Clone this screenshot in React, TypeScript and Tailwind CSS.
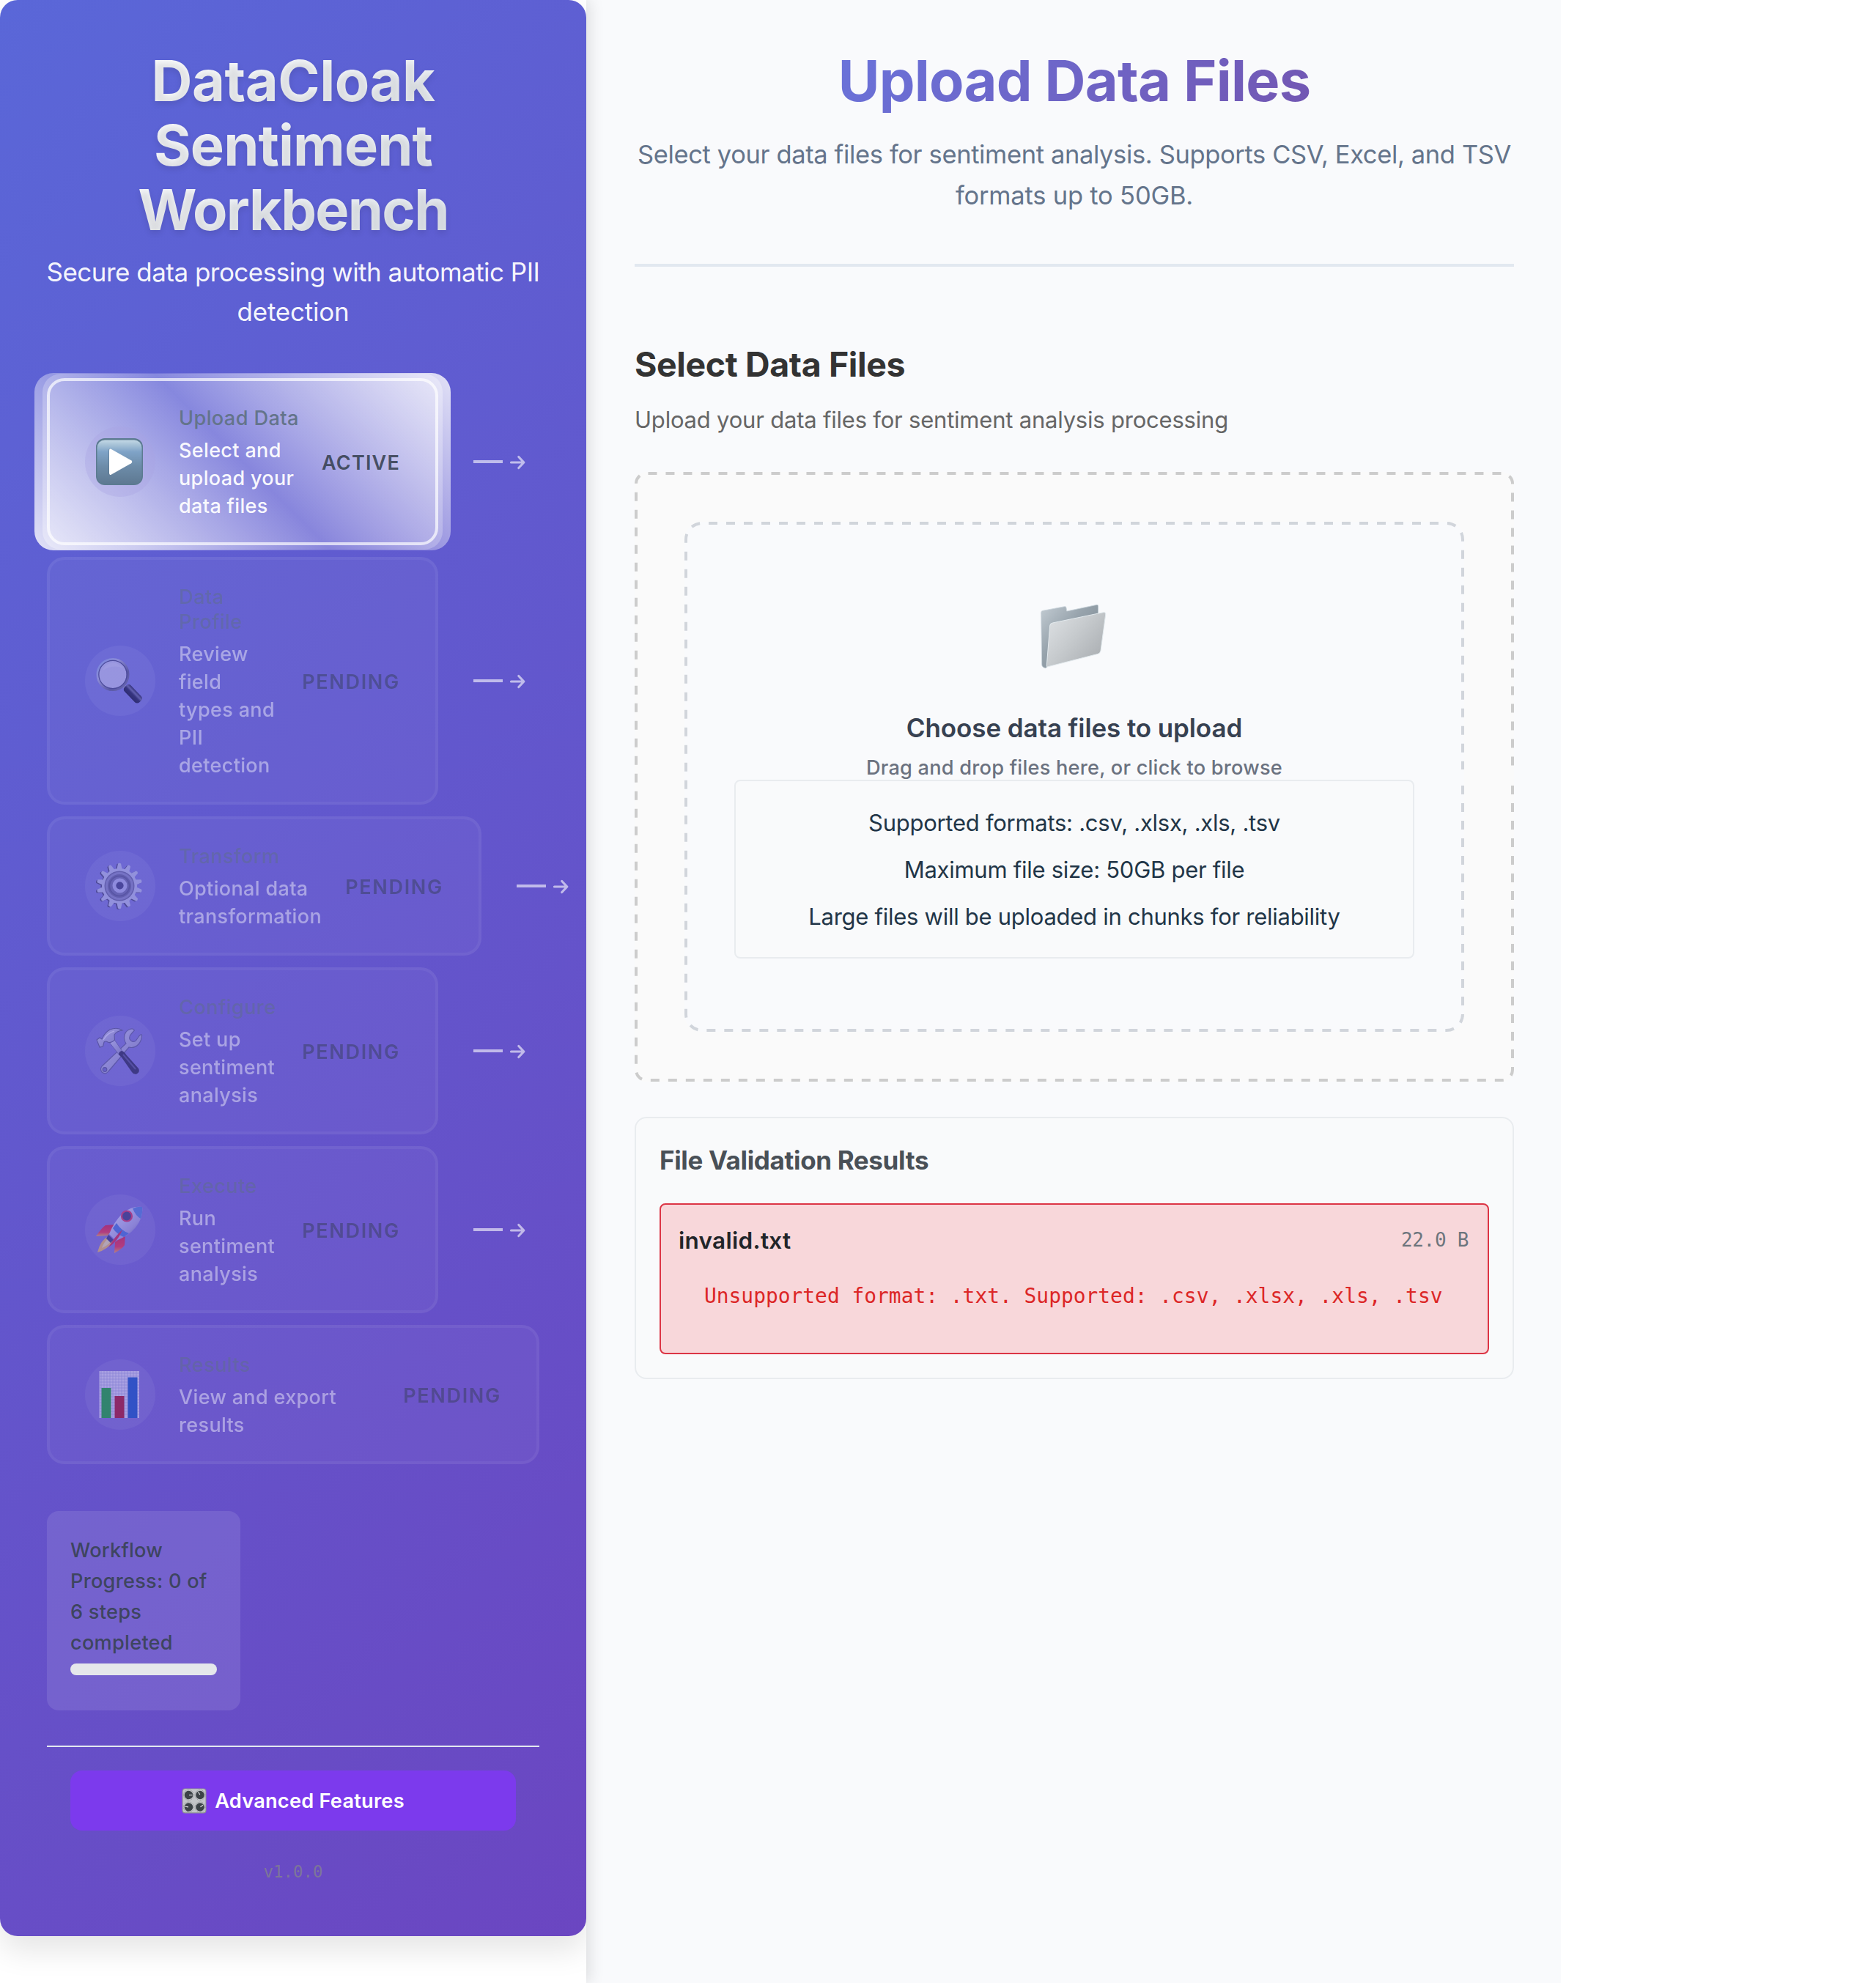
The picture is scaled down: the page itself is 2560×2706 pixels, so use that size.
import React from "react";

function PlayIcon() {
  return (
    <svg viewBox="0 0 64 64" className="size-16">
      <defs>
        <linearGradient id="play-face" x1="0" y1="0" x2="0" y2="1">
          <stop offset="0" stopColor="#c3d8e6" />
          <stop offset="0.1" stopColor="#a9c4d8" />
          <stop offset="0.27" stopColor="#7fa3c7" />
          <stop offset="0.6" stopColor="#6d8ca9" />
          <stop offset="1" stopColor="#5e7992" />
        </linearGradient>
      </defs>
      <rect x="0" y="0" width="64" height="64" rx="12" fill="#5c7b91" />
      <rect x="1.5" y="2.5" width="61" height="59.5" rx="10.5" fill="url(#play-face)" />
      <path d="M17 17 Q17 13.6 20.3 15 L47.4 30.3 Q50.3 32.2 47.4 34.2 L20.4 49.4 Q17 51 17 47.6 Z" fill="#4f6b84" opacity="0.5" />
      <path d="M18 17 Q18 13.6 21 15 L48 30.3 Q50.6 32.2 48 34.2 L21 49.4 Q18 51 18 47.6 Z" fill="#fff" />
    </svg>
  );
}

function SearchIcon() {
  return (
    <svg viewBox="0 0 64 64" className="size-16">
      <defs>
        <linearGradient id="lens-rim" x1="0" y1="0" x2="1" y2="1">
          <stop offset="0" stopColor="#8fb0f0" />
          <stop offset="0.35" stopColor="#b8b8da" />
          <stop offset="0.7" stopColor="#55557c" />
          <stop offset="1" stopColor="#77779a" />
        </linearGradient>
        <linearGradient id="lens-handle" x1="0" y1="1" x2="0" y2="0">
          <stop offset="0" stopColor="#000018" />
          <stop offset="0.45" stopColor="#0c0c30" />
          <stop offset="0.7" stopColor="#64648c" />
          <stop offset="1" stopColor="#0a0a28" />
        </linearGradient>
      </defs>
      <path d="M38 39 L43 44" stroke="#9a9ac0" strokeWidth="5" />
      <circle cx="23" cy="23.500" r="20.500" fill="#d0cdee" stroke="url(#lens-rim)" strokeWidth="4" />
      <circle cx="23" cy="23.500" r="19.200" fill="none" stroke="#3a3a66" strokeWidth="1.200" />
      <path d="M9 18 Q12 9 22 7.500 Q31 7 37 15 Q24 9 9 18Z" fill="#fff" opacity="0.25" />
      <rect x="36" y="43.500" width="29" height="12" rx="4.500" transform="rotate(46 50 49.500)" fill="url(#lens-handle)" />
    </svg>
  );
}

const TEETH = Array.from({ length: 14 }, (_, i) => (i * 360) / 14);

function GearIcon() {
  return (
    <svg viewBox="0 0 64 64" className="size-16">
      <g fill="#3c3c62" transform="translate(-1.600 0.800)">
        {TEETH.map((a) => (
          <path key={a} d="M27.800 12 L30 1.500 Q32 0 34 1.500 L36.200 12 Z" transform={`rotate(${a} 32 32)`} />
        ))}
        <circle cx="32" cy="32" r="24" />
      </g>
      <g fill="#c4c8ea">
        {TEETH.map((a) => (
          <path key={a} d="M27.800 12 L30 1.500 Q32 0 34 1.500 L36.200 12 Z" transform={`rotate(${a} 32 32)`} />
        ))}
        <circle cx="32" cy="32" r="24" />
      </g>
      <circle cx="32" cy="32" r="20.500" fill="#62628e" />
      <circle cx="32" cy="32" r="17.500" fill="none" stroke="#8a8aba" strokeWidth="3" />
      <circle cx="32" cy="32" r="13.500" fill="none" stroke="#50507c" strokeWidth="1.500" />
      <circle cx="32" cy="32" r="12.500" fill="#6c6c9c" />
      <circle cx="32.500" cy="31.500" r="7.500" fill="none" stroke="#bcbcec" strokeWidth="5" />
      <circle cx="32.500" cy="31.500" r="5" fill="#34346c" />
    </svg>
  );
}

function ToolsIcon() {
  return (
    <svg viewBox="0 0 64 64" className="size-16">
      <defs>
        <linearGradient id="steel" x1="0" y1="0" x2="1" y2="1">
          <stop offset="0" stopColor="#dcdcf4" />
          <stop offset="0.5" stopColor="#b4b4da" />
          <stop offset="1" stopColor="#8c8cb8" />
        </linearGradient>
      </defs>
      <path
        d="M46 2.500 Q38 6 38.500 15 Q39 19 41 22 L8 53 Q5 57 8 61 Q13 65 17 60 L45 27 Q52 29 58 23 Q63 17 62.500 10 Q60 9 58 13 L54 18.500 Q49 21 46 16 Q45 12 48 9 L52.500 4 Q51 0.500 46 2.500Z"
        fill="url(#steel)"
        stroke="#58588a"
        strokeWidth="1.200"
      />
      <circle cx="12" cy="57.500" r="2.800" fill="#6a67c4" stroke="#51517f" strokeWidth="1.200" />
      <path d="M18 20 L24.500 16 L37 34 L32 38Z" fill="url(#steel)" stroke="#58588a" strokeWidth="0.800" />
      <path d="M31 37 Q31 33 35 32 Q39 33 41 37 L58 56 Q60.500 61 55.500 63.500 Q51 64.500 49 61 L35 41Z" fill="#1c1c40" />
      <path d="M37 37 L54 57" stroke="#4a4a7a" strokeWidth="2" />
      <path
        d="M1 17 L5 14 L8 16 Q12 7 19 3 Q29 -1 36 4 Q28 5 25 10 L25.500 17 Q21 22 16 20 Q13 18 11 20 L9.500 26 L5 27Z"
        fill="url(#steel)"
        stroke="#50507e"
        strokeWidth="1.100"
      />
      <path d="M10 17 Q15 8 25 5" stroke="#f2f2ff" strokeWidth="1.500" fill="none" />
    </svg>
  );
}

function RocketIcon() {
  return (
    <svg viewBox="0 0 64 64" className="size-16">
      <defs>
        <linearGradient id="hull" x1="0" y1="0" x2="1" y2="1">
          <stop offset="0" stopColor="#60a6ee" />
          <stop offset="0.3" stopColor="#d8dcfa" />
          <stop offset="0.65" stopColor="#b2aee0" />
          <stop offset="1" stopColor="#44448c" />
        </linearGradient>
        <linearGradient id="fin" x1="0" y1="0" x2="0" y2="1">
          <stop offset="0" stopColor="#e01030" />
          <stop offset="0.65" stopColor="#ff2436" />
          <stop offset="1" stopColor="#ffb040" />
        </linearGradient>
      </defs>
      <path d="M27 25 L13 26 Q8 29 0 41 L16 40Z" fill="url(#fin)" />
      <path d="M40 39 L39 53 Q36 58 25 64 L26 49Z" fill="url(#fin)" />
      <path d="M17 41 Q6 46 2 63 Q16 59 24 47Z" fill="#ffc850" />
      <path d="M17 44 Q11 48 8 57 Q16 54 20 48Z" fill="#fff1a4" />
      <path d="M17 39 L24 46 L20 50 L14 44Z" fill="#2e2e70" />
      <path d="M63 1 Q65 15 54 29 Q44 41 27 47 L18 38 Q24 22 36 10 Q49 -1 63 1Z" fill="url(#hull)" />
      <path d="M63 1 Q64 9 61 17 Q54 13 50 3 Q57 0 63 1Z" fill="#4b82dc" />
      <path d="M28 23 Q34 33 45 37 L38 42 Q28 38 23 30Z" fill="#3d74dc" />
      <circle cx="42" cy="13.500" r="7" fill="#30306a" stroke="#e8284c" strokeWidth="2.200" />
      <path d="M36 32 Q26 41 17 56 Q30 48 36 32Z" fill="#e31a38" />
    </svg>
  );
}

const GRID = Array.from({ length: 15 }, (_, i) => i * 4 + 3);

function ChartIcon() {
  return (
    <svg viewBox="0 0 64 64" className="size-16">
      <rect x="4.500" y="0" width="54.500" height="64" fill="#efeffa" />
      {GRID.map((p) => (
        <path key={p} d={`M4.500 ${p} H59`} stroke="#b0b3e0" strokeWidth="0.700" />
      ))}
      {GRID.slice(1, 14).map((p) => (
        <path key={p} d={`M${p} 0 V64`} stroke="#b0b3e0" strokeWidth="0.700" />
      ))}
      <rect x="7.500" y="23" width="13" height="41" fill="#00b414" />
      <rect x="25.500" y="34" width="13" height="30" fill="#b40008" />
      <rect x="43.500" y="8.500" width="13" height="55.500" fill="#0052c4" />
    </svg>
  );
}

const KNOBS: [number, number, number][] = [
  [9.5, 9.5, 0],
  [25, 9.5, -120],
  [9.5, 26, 190],
  [25, 26, -35],
];

function KnobsIcon() {
  return (
    <svg viewBox="0 0 34 35" className="h-[35px] w-[34px]">
      <rect x="0.500" y="0.500" width="33" height="34" rx="4" fill="#8d9094" />
      <rect x="1.500" y="1.200" width="31" height="32" rx="3.500" fill="#c3c6c9" />
      {KNOBS.map(([x, y, a]) => (
        <g key={`${x}-${y}`} transform={`translate(${x} ${y})`}>
          <circle r="7" fill="none" stroke="#85898d" strokeWidth="0.900" strokeDasharray="1 1" />
          <circle r="5.800" fill="#3c4347" />
          <path d="M0.500 0 H5" stroke="#e4e6e8" strokeWidth="1.100" transform={`rotate(${a})`} />
        </g>
      ))}
    </svg>
  );
}

function FolderIcon() {
  return (
    <svg viewBox="119 70 270 267" className="h-[89px] w-[90px]">
      <defs>
        <linearGradient id="folder-back" x1="0" y1="0" x2="1" y2="1">
          <stop offset="0" stopColor="#c3ccd3" />
          <stop offset="0.4" stopColor="#98a4ad" />
          <stop offset="1" stopColor="#6f7c86" />
        </linearGradient>
        <linearGradient id="folder-front" x1="0" y1="0" x2="1" y2="0.800">
          <stop offset="0" stopColor="#e0e3e6" />
          <stop offset="0.5" stopColor="#c6cacd" />
          <stop offset="1" stopColor="#a9adb1" />
        </linearGradient>
      </defs>
      <path
        d="M121 106 Q121 99 128 98 L217 81 Q223 80 224 86 L226 100 L349 74 Q355 73 355 79 L355 120 L146 328 L139 333 Q124 330 124 318 Z"
        fill="url(#folder-back)"
        stroke="#cbd5dc"
        strokeWidth="2.500"
      />
      <path
        d="M157 160 Q157 150 168 148 L376 105 Q386 103 385 115 L365 262 Q363 272 354 275 L146 328 Q143 328 144 322 Z"
        fill="url(#folder-front)"
        stroke="#e3eaee"
        strokeWidth="3"
      />
    </svg>
  );
}

function Connector() {
  return (
    <div className="ml-12 flex shrink-0 items-center text-white/60">
      <div className="h-1 w-10 bg-current" />
      <svg viewBox="0 0 22 20" className="mt-[2px] ml-[9px] h-5 w-[22px]" fill="none" stroke="currentColor" strokeWidth="3.200" strokeLinecap="round" strokeLinejoin="round">
        <path d="M2.500 10 H19.500 M12.800 2.500 L19.800 10 L12.800 17.500" />
      </svg>
    </div>
  );
}

type Step = {
  title: string[];
  lines: string[];
  status: string;
  width: string;
  icon: React.ReactNode;
  active?: boolean;
};

const STEPS: Step[] = [
  { title: ["Upload Data"], lines: ["Select and", "upload your", "data files"], status: "ACTIVE", width: "w-[534px]", icon: <PlayIcon />, active: true },
  { title: ["Data", "Profile"], lines: ["Review", "field", "types and", "PII", "detection"], status: "PENDING", width: "w-[534px]", icon: <SearchIcon /> },
  { title: ["Transform"], lines: ["Optional data", "transformation"], status: "PENDING", width: "w-[593px]", icon: <GearIcon /> },
  { title: ["Configure"], lines: ["Set up", "sentiment", "analysis"], status: "PENDING", width: "w-[534px]", icon: <ToolsIcon /> },
  { title: ["Execute"], lines: ["Run", "sentiment", "analysis"], status: "PENDING", width: "w-[534px]", icon: <RocketIcon /> },
  { title: ["Results"], lines: ["View and export", "results"], status: "PENDING", width: "w-[672px]", icon: <ChartIcon /> },
];

function StepCard({ step }: { step: Step }) {
  const { active } = step;
  return (
    <div
      className={`relative flex shrink-0 items-center rounded-[24px] border-4 px-12 py-8 ${step.width} ${
        active ? "border-white/70" : "border-white/10 bg-white/8 opacity-50"
      }`}
    >
      {active && (
        <>
          <div className="absolute -inset-x-[21px] -inset-y-[11px] rounded-[26px] bg-[linear-gradient(45deg,rgba(255,255,255,0.82),rgba(255,255,255,0.1)_50%,rgba(255,255,255,0.82))]" />
          <div className="absolute -inset-x-[10px] -inset-y-[10px] rounded-[25px] bg-[linear-gradient(45deg,rgba(255,255,255,0.32),rgba(255,255,255,0.17)_50%,rgba(255,255,255,0.32))]" />
        </>
      )}
      <div className={`relative flex size-24 shrink-0 items-center justify-center rounded-full ${active ? "bg-[#a8a2e2]/35" : "bg-white/10"}`}>
        <div className="-ml-[2px]">{step.icon}</div>
      </div>
      <div className="relative -mb-[2px] ml-8 pt-[2px]">
        <h3 className="mb-2 text-[27.2px] leading-[33.8px] font-medium tracking-[0.35px] text-[#64748b]">
          {step.title.map((t) => (
            <span key={t} className="block whitespace-nowrap">{t}</span>
          ))}
        </h3>
        <p className={`text-[27px] leading-[38.1px] font-medium tracking-[0.35px] ${active ? "text-white/95" : "text-white/90"}`}>
          {step.lines.map((l) => (
            <span key={l} className="block whitespace-nowrap">{l}</span>
          ))}
        </p>
      </div>
      <div className={`relative ml-auto pt-[3px] text-[27px] leading-10 font-semibold text-[#374151]/90 ${active ? "tracking-[1.2px]" : "tracking-[1.7px]"}`}>
        {step.status}
      </div>
    </div>
  );
}

function Sidebar() {
  return (
    <aside className="relative z-10 h-[2706px] w-[800px] shrink-0 bg-white shadow-[4px_0_20px_rgba(0,0,0,0.12)]">
      <div className="h-full overflow-hidden">
        <div className="flex h-[2642px] flex-col rounded-[24px] bg-[linear-gradient(135deg,#5a67d8_0%,#6b46c1_100%)] px-16 pt-[66px] shadow-[0_20px_40px_rgba(0,0,0,0.1)]">
          <header className="h-[450px] shrink-0 text-center">
            <h1 className="bg-[linear-gradient(135deg,#ffffff,#e2e8f0)] bg-clip-text text-[77.5px] leading-[88px] font-bold text-transparent [text-shadow:0_4px_8px_rgba(0,0,0,0.1)]">
              <span className="block tracking-[-0.5px]">DataCloak</span>
              <span className="block tracking-[-0.9px]">Sentiment</span>
              <span className="block tracking-[-1.7px]">Workbench</span>
            </h1>
            <p className="-mx-4 mt-[14px] text-[35px] leading-[54px] text-white/95">
              <span className="block tracking-[-0.52px] whitespace-nowrap">Secure data processing with automatic PII</span>
              <span className="block tracking-[-0.22px]">detection</span>
            </p>
          </header>

          <nav className="flex flex-col gap-4">
            {STEPS.map((step, i) => (
              <div key={i} className="flex items-center">
                <StepCard step={step} />
                {i < STEPS.length - 1 && <Connector />}
              </div>
            ))}
          </nav>

          <section className="mt-16 h-[272px] w-[264px] shrink-0 rounded-2xl bg-white/10 px-8 pt-[33px]">
            <p className="text-[27.2px] leading-[42px] font-medium tracking-[0.25px] text-[#374151]/90">
              <span className="block">Workflow</span>
              <span className="block whitespace-nowrap">Progress: 0 of</span>
              <span className="block">6 steps</span>
              <span className="block">completed</span>
            </p>
            <div className="mt-[7px] h-4 w-[200px] rounded-full bg-[#e5e7eb]" />
          </section>

          <footer className="mt-12 flex flex-col items-center border-t-2 border-[#e2e8f0] pt-8">
            <button className="flex h-[82px] w-[608px] items-center justify-center rounded-2xl bg-[#7c3aed] text-[27.2px] font-semibold tracking-[0.23px] text-white">
              <KnobsIcon />
              <span className="ml-[11px] pt-[3px]">Advanced Features</span>
            </button>
            <p className="mt-[39px] font-['DejaVu_Sans_Mono',monospace] text-[22.4px] leading-[34px] text-[#7d7699]">v1.0.0</p>
          </footer>
        </div>
      </div>
    </aside>
  );
}

function DashedOutline({ d, className, viewBox }: { d: string; className: string; viewBox: string }) {
  return (
    <svg viewBox={viewBox} className={`pointer-events-none absolute ${className}`} fill="none" stroke="currentColor" strokeWidth="4" strokeDasharray="12 12">
      <path d={d} />
    </svg>
  );
}

function DropZone() {
  return (
    <div className="relative mt-[47px] h-[832px] rounded-2xl bg-[#fafafa] p-[68px]">
      <DashedOutline
        viewBox="0 0 1200 832"
        className="inset-0 h-[832px] w-[1200px] text-[#cccccc]"
        d="M1198 428 V816 A14 14 0 0 1 1184 830 H16 A14 14 0 0 1 2 816 V16 A14 14 0 0 1 16 2 H1184 A14 14 0 0 1 1198 16 V412"
      />
      <div className="relative flex h-[696px] flex-col items-center rounded-[24px] bg-[#f9fafc] px-[68px] pt-[112px]">
        <DashedOutline
          viewBox="0 0 1064 696"
          className="inset-0 h-[696px] w-[1064px] text-[#d1d5db]"
          d="M1062 360 V672 A22 22 0 0 1 1040 694 H24 A22 22 0 0 1 2 672 V24 A22 22 0 0 1 24 2 H1040 A22 22 0 0 1 1062 24 V338"
        />
        <div className="-ml-[3px]">
          <FolderIcon />
        </div>
        <h3 className="mt-[53px] text-[35px] leading-[54px] font-semibold tracking-[-0.1px] text-[#374151]">Choose data files to upload</h3>
        <p className="mt-[12px] text-[27.2px] leading-[32px] font-medium tracking-[0.22px] text-[#6b7280]">Drag and drop files here, or click to browse</p>
        <div className="flex h-[244px] w-full flex-col gap-4 rounded-lg border-2 border-[#e9ecef] bg-[#f9fafb] pt-[33px] text-center text-[31px] leading-[48px] tracking-[-0.27px] text-[#213547]">
          <p>Supported formats: .csv, .xlsx, .xls, .tsv</p>
          <p>Maximum file size: 50GB per file</p>
          <p>Large files will be uploaded in chunks for reliability</p>
        </div>
      </div>
    </div>
  );
}

function ValidationResults() {
  return (
    <section className="mt-12 h-[358px] rounded-2xl border-2 border-[#e9ecef] bg-[#f9fafb] px-8 pt-[30px]">
      <h4 className="text-[35px] leading-[54px] font-bold tracking-[-0.35px] text-[#495057]">File Validation Results</h4>
      <div className="mt-8 h-[206px] rounded-lg border-2 border-[#dc3545] bg-[#f8d7da] px-6 pt-[25px]">
        <div className="flex justify-between">
          <span className="text-[31.5px] leading-[48px] font-semibold tracking-[0.3px] text-[#212529]">invalid.txt</span>
          <span className="pt-[3px] pr-[2px] font-['DejaVu_Sans_Mono',monospace] text-[26px] leading-10 tracking-[-0.3px] text-[#6c757d]">22.0 B</span>
        </div>
        <p className="mt-[31px] ml-[35px] font-['DejaVu_Sans_Mono',monospace] text-[27.9px] leading-[42px] whitespace-nowrap text-[#dc2626]">
          Unsupported format: .txt. Supported: .csv, .xlsx, .xls, .tsv
        </p>
      </div>
    </section>
  );
}

export default function App() {
  return (
    <div className="flex h-[2706px] w-[2560px] overflow-hidden bg-white font-['Inter',sans-serif]">
      <Sidebar />
      <main className="w-[1330px] shrink-0 bg-[#f9fafc] pr-16 pl-[66px]">
        <header className="h-[364px] border-b-4 border-[#e2e8f0] pt-[66px] text-center">
          <h1 className="bg-[linear-gradient(135deg,#667eea_0%,#764ba2_100%)] bg-clip-text pb-2 text-[77.5px] leading-[88px] font-bold tracking-[-0.74px] text-transparent">
            Upload Data Files
          </h1>
          <p className="mt-[21px] text-[34.5px] leading-[56.3px] text-[#64748b]">
            <span className="block tracking-[-0.37px] whitespace-nowrap">
              Select your data files for sentiment analysis. Supports CSV, Excel, and TSV
            </span>
            <span className="block tracking-[-0.2px]">formats up to 50GB.</span>
          </p>
        </header>
        <h2 className="mt-[105px] text-[46.5px] leading-[56px] font-bold tracking-[-0.4px] text-[#333333]">Select Data Files</h2>
        <p className="mt-6 text-[31px] leading-[48px] tracking-[-0.21px] text-[#666666]">Upload your data files for sentiment analysis processing</p>
        <DropZone />
        <ValidationResults />
      </main>
    </div>
  );
}
